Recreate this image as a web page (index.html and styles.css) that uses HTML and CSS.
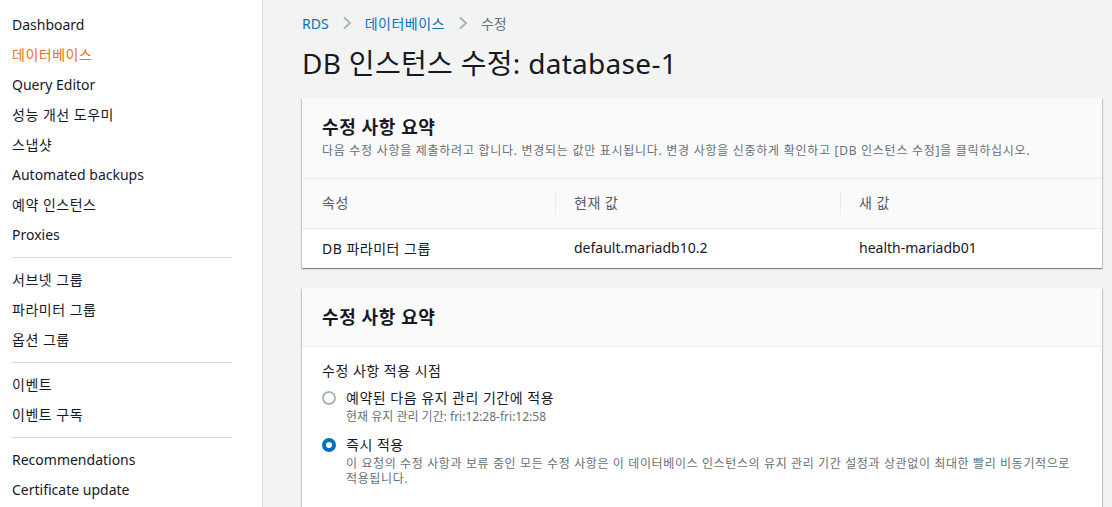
FILE: index.html
```html
<!DOCTYPE html>
<html lang="ko">
  <head>
    <meta charset="UTF-8" />
    <meta name="viewport" content="width=device-width, initial-scale=1.0" />
    <title>DB 인스턴스 수정</title>
    <link rel="stylesheet" href="styles.css">
  </head>
  <body>
    <div class="layout">
      <nav class="sidebar">
        <ul class="nav-group">
          <li>Dashboard</li>
          <li class="active ko">데이터베이스</li>
          <li>Query Editor</li>
          <li class="ko">성능 개선 도우미</li>
          <li class="ko">스냅샷</li>
          <li>Automated backups</li>
          <li class="ko">예약 인스턴스</li>
          <li>Proxies</li>
        </ul>
        <ul class="nav-group">
          <li class="ko">서브넷 그룹</li>
          <li class="ko">파라미터 그룹</li>
          <li class="ko">옵션 그룹</li>
        </ul>
        <ul class="nav-group">
          <li class="ko">이벤트</li>
          <li class="ko">이벤트 구독</li>
        </ul>
        <ul class="nav-group">
          <li>Recommendations</li>
          <li>Certificate update</li>
        </ul>
      </nav>

      <main class="content">
        <div class="breadcrumb">
          <a href="#">RDS</a>
          <svg class="chevron" width="12" height="14" viewBox="0 0 12 14"><path d="M3 1.5 L9 7 L3 12.5" fill="none" stroke="#aab7b8" stroke-width="2"/></svg>
          <a href="#" class="ko">데이터베이스</a>
          <svg class="chevron" width="12" height="14" viewBox="0 0 12 14"><path d="M3 1.5 L9 7 L3 12.5" fill="none" stroke="#aab7b8" stroke-width="2"/></svg>
          <span class="current">수정</span>
        </div>

        <h1 class="page-title">DB 인스턴스 수정: database-1</h1>

        <section class="card">
          <div class="card-header">
            <h2>수정 사항 요약</h2>
            <p>다음 수정 사항을 제출하려고 합니다. 변경되는 값만 표시됩니다. 변경 사항을 신중하게 확인하고 [DB 인스턴스 수정]을 클릭하십시오.</p>
          </div>
          <table class="summary">
            <thead>
              <tr>
                <th class="col-attr">속성</th>
                <th class="col-cur"><span class="sep"></span>현재 값</th>
                <th class="col-new"><span class="sep"></span>새 값</th>
              </tr>
            </thead>
            <tbody>
              <tr>
                <td class="ko">DB 파라미터 그룹</td>
                <td>default.mariadb10.2</td>
                <td>health-mariadb01</td>
              </tr>
            </tbody>
          </table>
        </section>

        <section class="card">
          <div class="card-header short">
            <h2>수정 사항 요약</h2>
          </div>
          <div class="card-body">
            <div class="field-label ko">수정 사항 적용 시점</div>
            <label class="radio">
              <input type="radio" name="apply" />
              <span class="radio-mark"></span>
              <span class="radio-text">
                <span class="radio-title ko">예약된 다음 유지 관리 기간에 적용</span>
                <span class="radio-desc">현재 유지 관리 기간: fri:12:28-fri:12:58</span>
              </span>
            </label>
            <label class="radio">
              <input type="radio" name="apply" checked />
              <span class="radio-mark"></span>
              <span class="radio-text">
                <span class="radio-title ko">즉시 적용</span>
                <span class="radio-desc ko">이 요청의 수정 사항과 보류 중인 모든 수정 사항은 이 데이터베이스 인스턴스의 유지 관리 기간 설정과 상관없이 최대한 빨리 비동기적으로 적용됩니다.</span>
              </span>
            </label>
          </div>
        </section>
      </main>
    </div>
  </body>
</html>
```

FILE: styles.css
```css
* {
  margin: 0;
  padding: 0;
  box-sizing: border-box;
}
:root {
  --text: #16191f;
  --muted: #687078;
  --link: #0073bb;
  --orange: #ec7211;
  --line: #eaeded;
  --page-bg: #f2f3f3;
}
body {
  font-family: "Noto Sans", "Noto Sans CJK KR", sans-serif;
  color: var(--text);
  background: var(--page-bg);
  font-size: 14px;
  overflow: hidden;
}
.ko {
  letter-spacing: 0.5px;
}
.layout {
  display: flex;
  height: 507px;
}

/* sidebar */
.sidebar {
  width: 263px;
  flex-shrink: 0;
  background: #fff;
  border-right: 1px solid #d5dbdb;
  padding: 10px 0 0 0;
}
.nav-group {
  list-style: none;
  margin: 0 30px 0 12px;
  padding-bottom: 7px;
  border-bottom: 1px solid #d5dbdb;
  margin-bottom: 7px;
}
.nav-group:last-child {
  border-bottom: none;
}
.nav-group li {
  height: 30px;
  line-height: 30px;
  font-size: 14px;
  color: var(--text);
  white-space: nowrap;
}
.nav-group li.active {
  color: var(--orange);
}

/* main */
.content {
  flex: 1;
  padding: 12px 10px 0 39px;
}
.breadcrumb {
  display: flex;
  align-items: center;
  height: 22px;
  font-size: 14px;
}
.breadcrumb a {
  color: var(--link);
  text-decoration: none;
}
.breadcrumb .chevron {
  margin: 0 12px 0 12px;
}
.breadcrumb .current {
  color: var(--muted);
}
.page-title {
  font-size: 28px;
  font-weight: 400;
  line-height: 36px;
  margin: 11px 0 17px;
  letter-spacing: 0.3px;
}

.card {
  background: #fff;
  box-shadow: 0 1px 1px 0 rgba(0, 28, 36, 0.3), 1px 1px 1px 0 rgba(0, 28, 36, 0.15), -1px 1px 1px 0 rgba(0, 28, 36, 0.15);
  margin-bottom: 20px;
  width: 800px;
}
.card-header {
  background: #fafafa;
  padding: 16px 20px 18px;
  border-bottom: 1px solid var(--line);
}
.card-header.short {
  padding: 16px 20px 16px;
}
.card-header h2 {
  font-size: 18px;
  font-weight: 700;
  line-height: 26px;
  letter-spacing: 0.6px;
}
.card-header p {
  font-size: 12px;
  color: var(--muted);
  line-height: 18px;
  margin-top: 2px;
  letter-spacing: 0.72px;
}

.summary {
  width: 100%;
  border-collapse: collapse;
}
.summary th {
  background: #fafafa;
  font-weight: 400;
  color: #545b64;
  text-align: left;
  height: 49px;
  padding: 0 20px 2px;
  border-bottom: 1px solid var(--line);
  position: relative;
  letter-spacing: 0.5px;
}
.summary th.col-attr {
  width: 253px;
}
.summary th.col-cur {
  width: 285px;
  padding-left: 19px;
}
.summary th.col-new {
  padding-left: 19px;
}
.summary .sep {
  position: absolute;
  left: 0;
  top: 13px;
  bottom: 13px;
  border-left: 1px solid var(--line);
}
.summary td {
  height: 40px;
  padding: 0 20px 1px;
  color: var(--text);
}
.summary td + td {
  padding-left: 19px;
}

.card-body {
  padding: 13px 20px 18px;
}
.field-label {
  line-height: 22px;
  margin-bottom: 5px;
}
.radio {
  display: flex;
  align-items: flex-start;
  margin-bottom: 10px;
}
.radio input {
  display: none;
}
.radio-mark {
  width: 14px;
  height: 14px;
  border-radius: 50%;
  border: 2px solid #aab7b8;
  margin: 4px 10px 0 0;
  flex-shrink: 0;
}
.radio input:checked + .radio-mark {
  border: 4px solid #0073bb;
}
.radio-text {
  display: flex;
  flex-direction: column;
}
.radio-title {
  line-height: 22px;
}
.radio-desc {
  font-size: 12px;
  color: var(--muted);
  line-height: 15px;
  max-width: 736px;
}
.radio-desc.ko {
  letter-spacing: 0.62px;
}
```
